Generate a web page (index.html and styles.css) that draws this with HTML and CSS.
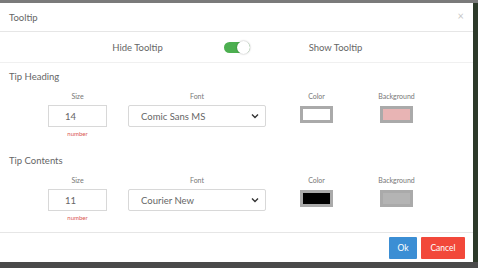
FILE: index.html
```html
<!doctype html>
<html lang="en">
    <head>
        <title>Tooltip</title>
        <meta charset="utf-8">
        <link rel="stylesheet" href="styles.css">
    </head>
    <body>
        <div class="backdrop-top"></div>
        <div class="page">
            <div class="modal">
                <div class="modal-header">
                    <span class="modal-title">Tooltip</span>
                    <span class="close">&times;</span>
                </div>

                <div class="switch-row">
                    <span>Hide Tooltip</span>
                    <span class="toggle"><span class="knob"></span></span>
                    <span>Show Tooltip</span>
                </div>

                <!-- heading -->
                <div class="section">
                    <div class="section-title">Tip Heading</div>
                    <div class="fields">
                        <div class="field size">
                            <label>Size</label>
                            <div class="input">14</div>
                            <div class="hint">number</div>
                        </div>
                        <div class="field font">
                            <label>Font</label>
                            <div class="select">Comic Sans MS
                                <svg width="8" height="6" viewBox="0 0 8 6"><path d="M1 1.5 L4 4.5 L7 1.5" fill="none" stroke="#333" stroke-width="1.4"/></svg>
                            </div>
                        </div>
                        <div class="field swatch-col">
                            <label>Color</label>
                            <div class="swatch" style="background:#ffffff"></div>
                        </div>
                        <div class="field swatch-col">
                            <label>Background</label>
                            <div class="swatch" style="background:#e8b4b4"></div>
                        </div>
                    </div>
                </div>

                <!-- contents -->
                <div class="section">
                    <div class="section-title">Tip Contents</div>
                    <div class="fields">
                        <div class="field size">
                            <label>Size</label>
                            <div class="input">11</div>
                            <div class="hint">number</div>
                        </div>
                        <div class="field font">
                            <label>Font</label>
                            <div class="select">Courier New
                                <svg width="8" height="6" viewBox="0 0 8 6"><path d="M1 1.5 L4 4.5 L7 1.5" fill="none" stroke="#333" stroke-width="1.4"/></svg>
                            </div>
                        </div>
                        <div class="field swatch-col">
                            <label>Color</label>
                            <div class="swatch" style="background:#000000"></div>
                        </div>
                        <div class="field swatch-col">
                            <label>Background</label>
                            <div class="swatch" style="background:#b4b4b4"></div>
                        </div>
                    </div>
                </div>

                <div class="modal-footer">
                    <button type="button" class="btn ok">Ok</button>
                    <button type="button" class="btn cancel">Cancel</button>
                </div>
            </div>
            <div class="side"></div>
        </div>
    </body>
</html>
```

FILE: styles.css
```css
body
{
    margin: 0;
    background-color: #4a4a4a;
    font-family: Lato, "Noto Sans", sans-serif;
    color: #666;
    overflow: hidden;
}
.backdrop-top
{
    height: 3px;
    background-color: #7a7a7a;
}
.page
{
    display: flex;
}
.side
{
    flex: 1;
    height: 259px;
    background-color: #2d3a2a;
}
.modal
{
    width: 473px;
    height: 259px;
    background-color: #fff;
    display: flex;
    flex-direction: column;
}
.modal-header
{
    height: 28px;
    border-bottom: 1px solid #e6e6e6;
    display: flex;
    align-items: center;
    justify-content: space-between;
    padding: 0 9px 0 9px;
}
.modal-title
{
    font-size: 9.5px;
    color: #666;
}
.close
{
    font-size: 11px;
    color: #c8c8c8;
    margin-top: -4px;
}
.switch-row
{
    height: 30px;
    border-bottom: 1px solid #f0f0f0;
    display: grid;
    grid-template-columns: 99px 99px 99px;
    justify-content: center;
    align-items: center;
    justify-items: center;
    font-size: 9.5px;
    color: #666;
}
.toggle
{
    width: 26px;
    height: 11px;
    border-radius: 6px;
    background-color: #4caf50;
    position: relative;
}
.knob
{
    position: absolute;
    right: 0;
    top: -1px;
    width: 13px;
    height: 13px;
    border-radius: 50%;
    background-color: #fff;
    box-shadow: 0 0 2px rgba(0, 0, 0, 0.35);
}
.section
{
    padding: 8px 9px 0 9px;
    height: 76px;
}
.section-title
{
    font-size: 9.5px;
    color: #666;
    height: 12px;
}
.fields
{
    display: flex;
    gap: 21px;
    margin-left: 39px;
    margin-top: 8px;
}
.field
{
    display: flex;
    flex-direction: column;
    align-items: center;
}
.field label
{
    font-size: 7px;
    color: #777;
    height: 10px;
    line-height: 10px;
    margin-bottom: 4px;
}
.size
{
    width: 59px;
}
.font
{
    width: 138px;
}
.swatch-col
{
    width: 59px;
}
.input, .select
{
    box-sizing: border-box;
    height: 22px;
    width: 100%;
    border: 1px solid #d8d8d8;
    font-size: 9.5px;
    color: #666;
    display: flex;
    align-items: center;
}
.input
{
    padding-left: 16px;
}
.select
{
    padding: 0 6px 0 12px;
    justify-content: space-between;
    border-radius: 2px;
}
.hint
{
    font-size: 6px;
    color: #d9534f;
    margin-top: 3px;
}
.swatch
{
    box-sizing: border-box;
    width: 33px;
    height: 17px;
    border: 3px solid #aaa;
    margin-top: 1px;
}
.modal-footer
{
    margin-top: auto;
    border-top: 1px solid #e6e6e6;
    height: 29px;
    display: flex;
    justify-content: flex-end;
    align-items: center;
    gap: 4px;
    padding-right: 8px;
}
.btn
{
    border: none;
    height: 22px;
    font-family: Lato, "Noto Sans", sans-serif;
    font-size: 8.5px;
    color: #fff;
    padding: 0;
    border-radius: 1px;
}
.ok
{
    width: 28px;
    background-color: #3b8ed4;
}
.cancel
{
    width: 44px;
    background-color: #f2483a;
}
```
